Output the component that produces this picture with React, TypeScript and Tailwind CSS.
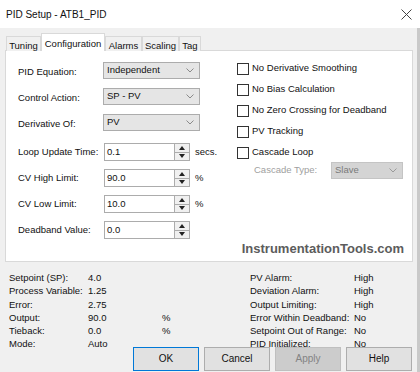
import React from "react";

const Chevron = ({ color = "#8a8a8a" }: { color?: string }) => (
    <svg width="8" height="5" viewBox="0 0 8 5" className="shrink-0">
        <path d="M0.5 0.5 L4 4 L7.5 0.5" fill="none" stroke={color} strokeWidth="1" />
    </svg>
);

const Select = ({ value }: { value: string }) => (
    <div className="w-[97px] h-[17px] bg-[#e5e5e5] border border-[#acacac] flex items-center justify-between pl-[3px] pr-[5px]">
        <span>{value}</span>
        <Chevron />
    </div>
);

const Spin = ({ value, unit }: { value: string; unit?: string }) => (
    <div className="flex items-center h-[18px]">
        <div className="w-[71px] h-[18px] bg-white border border-[#acacac] pl-[2px] leading-[15px]">{value}</div>
        <div className="w-[15px] h-[18px] border border-l-0 border-[#acacac] bg-[#f0f0f0] flex flex-col">
            <div className="flex-1 flex items-center justify-center border-b border-[#acacac]">
                <svg width="6" height="4" viewBox="0 0 6 4"><path d="M0 4 L3 0 L6 4 Z" fill="#222" /></svg>
            </div>
            <div className="flex-1 flex items-center justify-center">
                <svg width="6" height="4" viewBox="0 0 6 4"><path d="M0 0 L3 4 L6 0 Z" fill="#222" /></svg>
            </div>
        </div>
        {unit && <span className="ml-[5px]">{unit}</span>}
    </div>
);

const Check = ({ label }: { label: string }) => (
    <div className="flex items-center h-[13px]">
        <div className="w-[12px] h-[12px] border border-[#333] bg-white mr-[3px]" />
        <span>{label}</span>
    </div>
);

const tabs = [
    { name: "Tuning", w: "w-[35px]" },
    { name: "Configuration", w: "w-[64px]" },
    { name: "Alarms", w: "w-[37px]" },
    { name: "Scaling", w: "w-[37px]" },
    { name: "Tag", w: "w-[22px]" },
];

const leftStatus = [
    ["Setpoint (SP):", "4.0", ""],
    ["Process Variable:", "1.25", ""],
    ["Error:", "2.75", ""],
    ["Output:", "90.0", "%"],
    ["Tieback:", "0.0", "%"],
    ["Mode:", "Auto", ""],
];

const rightStatus = [
    ["PV Alarm:", "High"],
    ["Deviation Alarm:", "High"],
    ["Output Limiting:", "High"],
    ["Error Within Deadband:", "No"],
    ["Setpoint Out of Range:", "No"],
    ["PID Initialized:", "No"],
];

export default function App() {
    return (
        <div className="w-[420px] h-[372px] overflow-hidden bg-[#f0f0f0] text-[9.5px] text-[#111] font-['Liberation_Sans',Arial,sans-serif]">
            {/* title bar */}
            <div className="h-[28px] bg-white flex items-center justify-between pl-[6px] pr-[8px]">
                <span className="text-[10px]">PID Setup - ATB1_PID</span>
                <svg width="11" height="11" viewBox="0 0 11 11">
                    <path d="M0.5 0.5 L10.5 10.5 M10.5 0.5 L0.5 10.5" stroke="#444" strokeWidth="1" />
                </svg>
            </div>

            <div className="h-[344px] border-r-[3px] border-[#c9c9c9]">
                {/* tabs */}
                <div className="pt-[5px] pl-[6px] flex items-end h-[23px] -mb-[1px]">
                    {tabs.map((t) =>
                        t.name === "Configuration" ? (
                            <div
                                key={t.name}
                                className={`${t.w} h-[18px] relative z-10 bg-white border border-b-0 border-[#d9d9d9] flex items-start pt-[3px] justify-center`}
                            >
                                {t.name}
                            </div>
                        ) : (
                            <div
                                key={t.name}
                                className={`${t.w} h-[15px] bg-[#f0f0f0] border border-b-0 border-[#d9d9d9] flex items-start pt-[2px] justify-center`}
                            >
                                {t.name}
                            </div>
                        )
                    )}
                </div>

                {/* panel */}
                <div className="ml-[5px] w-[408px] h-[212px] bg-white border border-[#d9d9d9] pt-[11px] pl-[12px] flex flex-col">
                    <div className="flex">
                        <div className="w-[219px] flex flex-col">
                            <div className="flex items-center h-[17px]">
                                <span className="w-[85px] pt-[3px]">PID Equation:</span>
                                <Select value="Independent" />
                            </div>
                            <div className="flex items-center h-[17px] mt-[9px]">
                                <span className="w-[85px] pt-[3px]">Control Action:</span>
                                <Select value="SP - PV" />
                            </div>
                            <div className="flex items-center h-[17px] mt-[9px]">
                                <span className="w-[85px] pt-[3px]">Derivative Of:</span>
                                <Select value="PV" />
                            </div>
                            <div className="flex items-center mt-[12px]">
                                <span className="w-[86px]">Loop Update Time:</span>
                                <Spin value="0.1" unit="secs." />
                            </div>
                            <div className="flex items-center mt-[8px]">
                                <span className="w-[86px]">CV High Limit:</span>
                                <Spin value="90.0" unit="%" />
                            </div>
                            <div className="flex items-center mt-[8px]">
                                <span className="w-[86px]">CV Low Limit:</span>
                                <Spin value="10.0" unit="%" />
                            </div>
                            <div className="flex items-center mt-[8px]">
                                <span className="w-[86px]">Deadband Value:</span>
                                <Spin value="0.0" />
                            </div>
                        </div>

                        <div className="flex flex-col gap-[8px] pt-[0px]">
                            <Check label="No Derivative Smoothing" />
                            <Check label="No Bias Calculation" />
                            <Check label="No Zero Crossing for Deadband" />
                            <Check label="PV Tracking" />
                            <Check label="Cascade Loop" />
                            <div className="flex items-center mt-[-5px] pl-[17px]">
                                <span className="w-[77px] text-[#a0a0a0]">Cascade Type:</span>
                                <div className="w-[72px] h-[17px] bg-[#d4d4d4] border border-[#c4c4c4] flex items-center justify-between pl-[3px] pr-[5px] text-[#7a7a7a]">
                                    <span>Slave</span>
                                    <Chevron color="#9a9a9a" />
                                </div>
                            </div>
                        </div>
                    </div>
                    <div className="mt-[2px] pr-[8px] text-right text-[13px] leading-[15px] font-bold text-[#5c5c5c]">
                        InstrumentationTools.com
                    </div>
                </div>

                {/* status */}
                <div className="mt-[9px] pl-[9px] flex leading-[13.3px]">
                    <div className="w-[241px] grid grid-cols-[79px_74px_1fr]">
                        {leftStatus.map(([l, v, u]) => (
                            <React.Fragment key={l}>
                                <span>{l}</span>
                                <span>{v}</span>
                                <span>{u}</span>
                            </React.Fragment>
                        ))}
                    </div>
                    <div className="grid grid-cols-[104px_1fr]">
                        {rightStatus.map(([l, v]) => (
                            <React.Fragment key={l}>
                                <span>{l}</span>
                                <span>{v}</span>
                            </React.Fragment>
                        ))}
                    </div>
                </div>

                {/* buttons */}
                <div className="relative mt-[-4px] pl-[133px] flex gap-[5px] text-[10px]">
                    <div className="w-[66px] h-[24px] bg-[#e1e1e1] border border-[#0078d7] flex items-center justify-center">OK</div>
                    <div className="w-[66px] h-[24px] bg-[#e1e1e1] border border-[#adadad] flex items-center justify-center">Cancel</div>
                    <div className="w-[66px] h-[24px] bg-[#cccccc] border border-[#bfbfbf] text-[#838383] flex items-center justify-center">Apply</div>
                    <div className="w-[66px] h-[24px] bg-[#e1e1e1] border border-[#adadad] flex items-center justify-center">Help</div>
                </div>
            </div>
        </div>
    );
}
